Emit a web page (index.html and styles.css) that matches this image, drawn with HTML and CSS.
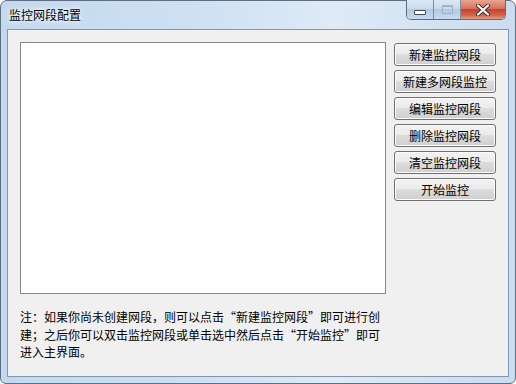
FILE: index.html
```html
<!DOCTYPE html>
<html lang="zh-CN">
<head>
<meta charset="utf-8">
<link rel="stylesheet" href="styles.css">
</head>
<body>
<div class="window">
  <div class="titlebar">
    <span class="title">监控网段配置</span>
    <div class="caption">
      <div class="cbtn min"><span class="min-icon"></span></div>
      <div class="cbtn max"><span class="max-icon"></span></div>
      <div class="cbtn close">
        <svg width="16" height="12" viewBox="0 0 16 12">
          <path d="M3 1.5 L13 10.5 M13 1.5 L3 10.5" stroke="#3c2a2a" stroke-width="4" stroke-linecap="round"/>
          <path d="M3 1.5 L13 10.5 M13 1.5 L3 10.5" stroke="#ffffff" stroke-width="2.2" stroke-linecap="round"/>
        </svg>
      </div>
    </div>
  </div>
  <div class="client">
    <div class="listbox"></div>
    <div class="buttons">
      <div class="btn">新建监控网段</div>
      <div class="btn">新建多网段监控</div>
      <div class="btn">编辑监控网段</div>
      <div class="btn">删除监控网段</div>
      <div class="btn">清空监控网段</div>
      <div class="btn">开始监控</div>
    </div>
    <p class="note">注：如果你尚未创建网段，则可以点击“新建监控网段”即可进行创建；之后你可以双击监控网段或单击选中然后点击“开始监控”即可进入主界面。</p>
  </div>
</div>
</body>
</html>
```
FILE: styles.css
```css
html, body {
  margin: 0;
  padding: 0;
  background: #ffffff;
}
body {
  font-family: "Noto Sans CJK SC", "Noto Sans", sans-serif;
  font-size: 12px;
  color: #000;
}
.window {
  box-sizing: border-box;
  width: 516px;
  height: 384px;
  border: 1px solid #5f6e80;
  border-radius: 7px 7px 6px 6px;
  background: linear-gradient(to right, #c3d9ef 0%, #cfe1f3 40%, #dfeaf6 65%, #cadcef 100%);
  padding: 0 6px 6px 6px;
  display: flex;
  flex-direction: column;
}
.titlebar {
  height: 28px;
  display: flex;
  align-items: flex-start;
  flex: none;
}
.title {
  padding-left: 2px;
  line-height: 28px;
  font-size: 12px;
  color: #000;
  text-shadow: 0 0 6px #ffffff, 0 0 3px #ffffff;
}
.caption {
  margin-left: auto;
  margin-right: 3px;
  display: flex;
  height: 19px;
  margin-top: -1px;
  border: 1px solid #5c6b7f;
  border-top: none;
  border-radius: 0 0 5px 5px;
  overflow: hidden;
}
.cbtn {
  height: 19px;
  display: flex;
  align-items: center;
  justify-content: center;
}
.min, .max {
  width: 26px;
  background: linear-gradient(to bottom, #dce8f4 0%, #c9dbee 45%, #b3c9e1 50%, #c7dbf0 100%);
  border-right: 1px solid #7d8ea3;
}
.min-icon {
  display: block;
  width: 10px;
  height: 3px;
  margin-top: 5px;
  background: #ffffff;
  border: 1px solid #3d4a5c;
  border-radius: 1px;
}
.max-icon {
  display: block;
  width: 9px;
  height: 6px;
  border: 1px solid #9fb2c8;
  border-top-width: 2px;
  background: transparent;
}
.close {
  width: 44px;
  background: linear-gradient(to bottom, #e8a491 0%, #d8715c 45%, #c4432c 50%, #d4644a 80%, #e0a08a 100%);
}
.client {
  flex: 1;
  background: #f0f0f0;
  border: 1px solid #8097b1;
  display: grid;
  grid-template-columns: 366px 102px;
  grid-template-rows: 252px auto;
  column-gap: 8px;
  padding: 12px 12px 0 12px;
  align-content: start;
}
.listbox {
  background: #ffffff;
  border: 1px solid #828790;
}
.buttons {
  display: flex;
  flex-direction: column;
  gap: 4px;
  padding-top: 1px;
}
.btn {
  box-sizing: border-box;
  height: 23px;
  border: 1px solid #707070;
  border-radius: 3px;
  background: linear-gradient(to bottom, #f2f2f2 0%, #ebebeb 49%, #dddddd 50%, #cfcfcf 100%);
  box-shadow: inset 0 0 0 1px #fcfcfc;
  display: flex;
  align-items: center;
  justify-content: center;
  font-size: 12px;
  color: #000;
}
.note {
  margin: 14px 0 0 0;
  font-size: 12px;
  line-height: 17.5px;
  color: #000;
}
```
